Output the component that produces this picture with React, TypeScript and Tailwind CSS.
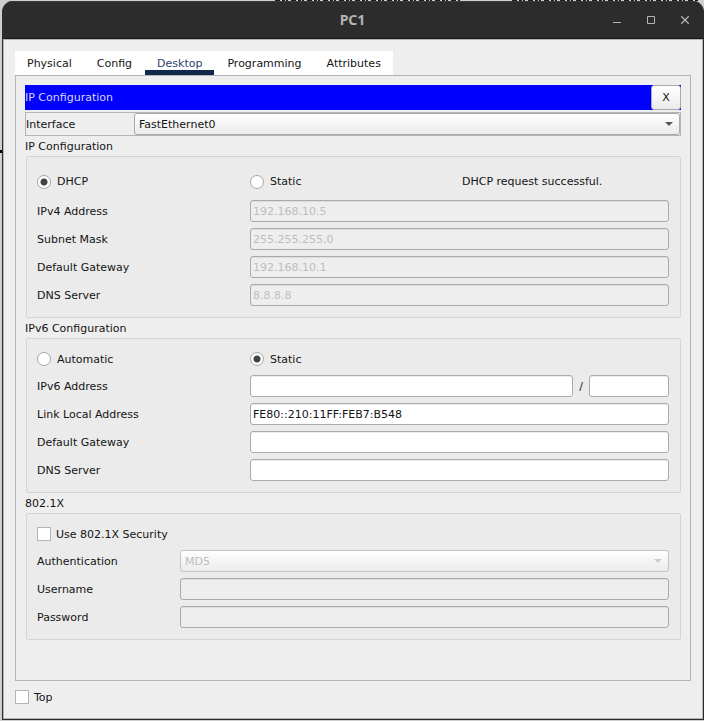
import { useState } from 'react';
import type { ReactNode } from 'react';

const TABS = ['Physical', 'Config', 'Desktop', 'Programming', 'Attributes'];

const inputClass =
  'block h-[22px] w-full min-w-0 rounded-[3px] border border-[#abaaab] bg-white px-[2px] leading-[14px] shadow-[inset_0_1px_#ececec] outline-none disabled:bg-[#eeeeee] disabled:text-[#bebebe] disabled:shadow-[inset_0_1px_#dddddd]';

function Group({ title, children, className }: { title: string; children: ReactNode; className: string }) {
  return (
    <section>
      <h2 className="flex h-5 items-center">{title}</h2>
      <div className={`ml-px flex flex-col gap-[6px] rounded-[2px] border border-[#d4d4d4] bg-[#ebebeb] pr-[11px] pb-[11px] pl-[10px] ${className}`}>
        {children}
      </div>
    </section>
  );
}

function Field({ id, label, labelClass = 'w-[213px]', children }: { id: string; label: string; labelClass?: string; children: ReactNode }) {
  return (
    <div className="flex h-[22px] items-center">
      <label htmlFor={id} className={`shrink-0 ${labelClass}`}>{label}</label>
      <div className="flex min-w-0 flex-1 items-center">{children}</div>
    </div>
  );
}

function Radio({ name, label, checked, onChange, className }: { name: string; label: string; checked: boolean; onChange: () => void; className: string }) {
  return (
    <div className={`flex shrink-0 ${className}`}>
      <label className="flex items-center gap-[6px]">
        <input
          type="radio"
          name={name}
          checked={checked}
          onChange={onChange}
          className="size-[14px] appearance-none rounded-full border border-[#a6a6a6] bg-white checked:bg-[radial-gradient(circle,#434343_3px,#ffffff_4px)]"
        />
        {label}
      </label>
    </div>
  );
}

function Checkbox({ label, checked, onChange }: { label: string; checked: boolean; onChange: (v: boolean) => void }) {
  return (
    <label className="flex items-center gap-[5px]">
      <input
        type="checkbox"
        checked={checked}
        onChange={(e) => onChange(e.target.checked)}
        className="size-[14px] appearance-none border border-[#b4b4b4] bg-white checked:bg-[#434343] checked:shadow-[inset_0_0_0_2px_#ffffff]"
      />
      {label}
    </label>
  );
}

function Select({ id, options, disabled }: { id: string; options: string[]; disabled?: boolean }) {
  return (
    <div className="relative min-w-0 flex-1">
      <select
        id={id}
        disabled={disabled}
        className="block h-[22px] w-full appearance-none rounded-[3px] border border-[#abaaab] bg-linear-to-b from-white to-[#ebebeb] px-1 outline-none disabled:border-[#c4c4c4] disabled:text-[#bebebe] disabled:opacity-100"
      >
        {options.map((o) => <option key={o}>{o}</option>)}
      </select>
      <svg
        viewBox="0 0 8 4"
        className={`pointer-events-none absolute top-[9px] right-[7px] h-1 w-2 ${disabled ? 'fill-[#cbcbcb]' : 'fill-[#555555]'}`}
      >
        <path d="M0 0h8L4 4z" />
      </svg>
    </div>
  );
}

export default function App() {
  const [tab, setTab] = useState('Desktop');
  const [ipv4Mode, setIpv4Mode] = useState('dhcp');
  const [ipv6Mode, setIpv6Mode] = useState('static');
  const [security, setSecurity] = useState(false);
  const [onTop, setOnTop] = useState(false);
  const [linkLocal, setLinkLocal] = useState('FE80::210:11FF:FEB7:B548');

  const dhcp = ipv4Mode === 'dhcp';

  return (
    <div className="relative flex min-h-screen flex-col bg-[#cfcfcf] pt-px pb-px pl-[2px] font-['DejaVu_Sans',sans-serif] text-[11px] leading-[13px] text-[#141414]">
      {/* workspace showing behind the window */}
      <svg className="absolute top-0 left-0 h-px w-full">
        <path d="M275 .5H460M512 .5H698" stroke="#1d1d1d" strokeDasharray="5 2 3 1 2 3" />
      </svg>
      <div className="absolute top-[150px] left-0 h-[3px] w-[2px] bg-black" />

      <div className="flex flex-1 flex-col overflow-hidden rounded-t-[11px] border-x border-b border-[#2c2c2c] bg-[#2c2c2c]">
        <header className="flex h-[38px] shrink-0 items-center border-t border-b border-t-[#3b3b3b] border-b-[#191919] pr-px text-[#b4b4b4]">
          <div className="w-[102px]" />
          <h1 className="flex-1 text-center font-['Noto_Sans',sans-serif] text-sm leading-5 font-bold">PC1</h1>
          <button aria-label="Minimize" className="flex h-9 w-[34px] items-center justify-center">
            <svg className="size-[8px]" viewBox="0 0 8 8" fill="none" stroke="currentColor"><path d="M0 6.5h8" /></svg>
          </button>
          <button aria-label="Maximize" className="flex h-9 w-[34px] items-center justify-center">
            <svg className="size-[8px]" viewBox="0 0 8 8" fill="none" stroke="currentColor"><path d="M.5.5h7v7h-7z" /></svg>
          </button>
          <button aria-label="Close" className="flex h-9 w-[34px] items-center justify-center">
            <svg className="size-[8px]" viewBox="0 0 8 8" fill="none" stroke="currentColor" strokeWidth="1.3"><path d="M.3.3l7.4 7.4M7.7.3L.3 7.7" /></svg>
          </button>
        </header>

        <main className="flex flex-1 flex-col border border-[#b5b5b5] bg-[#eeeeee] px-[11px] pt-[11px]">
          <div role="tablist" className="flex h-6 gap-px self-start bg-white">
            {TABS.map((t) => (
              <button
                key={t}
                role="tab"
                aria-selected={t === tab}
                onClick={() => setTab(t)}
                className={`px-3 ${t === tab ? 'text-[#2b4468] shadow-[inset_0_-5px_#11284b]' : ''}`}
              >
                {t}
              </button>
            ))}
          </div>

          <div className="flex-1 border border-[#b4b4b4] p-[9px]">
            <div className="flex h-[25px] items-center justify-between bg-[#0000ff] text-[#d8d8f8]">
              <span>IP Configuration</span>
              <button className="h-[25px] w-[30px] rounded-[3px] border border-[#abaaab] bg-linear-to-b from-white to-[#ebebeb] text-[#141414]">X</button>
            </div>

            <div className="mt-[2px] flex h-6 items-center border border-[#b4b4b4]">
              <label htmlFor="interface" className="w-[108px] shrink-0">Interface</label>
              <Select id="interface" options={['FastEthernet0']} />
            </div>

            <Group title="IP Configuration" className="pt-3">
              <div className="flex h-[25px] items-center">
                <Radio name="ipv4" label="DHCP" checked={dhcp} onChange={() => setIpv4Mode('dhcp')} className="w-[213px]" />
                <Radio name="ipv4" label="Static" checked={!dhcp} onChange={() => setIpv4Mode('static')} className="w-[212px]" />
                <span>{dhcp && 'DHCP request successful.'}</span>
              </div>
              <Field id="ipv4-address" label="IPv4 Address">
                <input id="ipv4-address" className={inputClass} defaultValue="192.168.10.5" disabled={dhcp} />
              </Field>
              <Field id="ipv4-mask" label="Subnet Mask">
                <input id="ipv4-mask" className={inputClass} defaultValue="255.255.255.0" disabled={dhcp} />
              </Field>
              <Field id="ipv4-gateway" label="Default Gateway">
                <input id="ipv4-gateway" className={inputClass} defaultValue="192.168.10.1" disabled={dhcp} />
              </Field>
              <Field id="ipv4-dns" label="DNS Server">
                <input id="ipv4-dns" className={inputClass} defaultValue="8.8.8.8" disabled={dhcp} />
              </Field>
            </Group>

            <Group title="IPv6 Configuration" className="pt-[10px]">
              <div className="flex h-5 items-center">
                <Radio name="ipv6" label="Automatic" checked={ipv6Mode === 'auto'} onChange={() => setIpv6Mode('auto')} className="w-[213px]" />
                <Radio name="ipv6" label="Static" checked={ipv6Mode === 'static'} onChange={() => setIpv6Mode('static')} className="w-[212px]" />
              </div>
              <Field id="ipv6-address" label="IPv6 Address">
                <input id="ipv6-address" className={inputClass} />
                <span className="w-4 shrink-0 text-center">/</span>
                <div className="w-20 shrink-0">
                  <input aria-label="Prefix length" className={inputClass} />
                </div>
              </Field>
              <Field id="link-local" label="Link Local Address">
                <input id="link-local" className={inputClass} value={linkLocal} onChange={(e) => setLinkLocal(e.target.value)} />
              </Field>
              <Field id="ipv6-gateway" label="Default Gateway">
                <input id="ipv6-gateway" className={inputClass} />
              </Field>
              <Field id="ipv6-dns" label="DNS Server">
                <input id="ipv6-dns" className={inputClass} />
              </Field>
            </Group>

            <Group title="802.1X" className="pt-[10px]">
              <div className="flex h-5 items-center">
                <Checkbox label="Use 802.1X Security" checked={security} onChange={setSecurity} />
              </div>
              <Field id="auth" label="Authentication" labelClass="w-[143px]">
                <Select id="auth" options={['MD5']} disabled={!security} />
              </Field>
              <Field id="username" label="Username" labelClass="w-[143px]">
                <input id="username" className={inputClass} disabled={!security} />
              </Field>
              <Field id="password" label="Password" labelClass="w-[143px]">
                <input id="password" type="password" className={inputClass} disabled={!security} />
              </Field>
            </Group>
          </div>

          <footer className="flex h-[37px] shrink-0 items-center pb-[5px]">
            <Checkbox label="Top" checked={onTop} onChange={setOnTop} />
          </footer>
        </main>
      </div>
    </div>
  );
}
